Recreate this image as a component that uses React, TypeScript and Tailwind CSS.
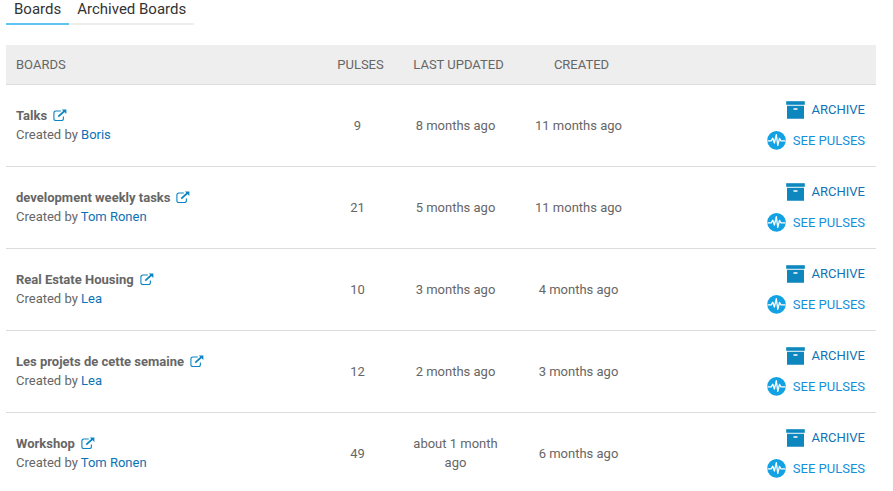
type Board = {
  name: string;
  creator: string;
  pulses: number;
  updated: string;
  created: string;
};

const BOARDS: Board[] = [
  { name: "Talks", creator: "Boris", pulses: 9, updated: "8 months ago", created: "11 months ago" },
  { name: "development weekly tasks", creator: "Tom Ronen", pulses: 21, updated: "5 months ago", created: "11 months ago" },
  { name: "Real Estate Housing", creator: "Lea", pulses: 10, updated: "3 months ago", created: "4 months ago" },
  { name: "Les projets de cette semaine", creator: "Lea", pulses: 12, updated: "2 months ago", created: "3 months ago" },
  { name: "Workshop", creator: "Tom Ronen", pulses: 49, updated: "about 1 month ago", created: "6 months ago" },
];

function ExternalLinkIcon() {
  return (
    <svg viewBox="0 0 14 14" className="size-3.5" fill="none" aria-hidden>
      <path
        d="M7.8 2H3Q.9 2 .9 4.1V9.4Q.9 11.5 3 11.5H8.3Q10.4 11.5 10.4 9.4V7.4"
        stroke="currentColor"
        strokeWidth="1.1"
      />
      <path d="M5.2 7.6L11.5 2" stroke="currentColor" strokeWidth="1.7" />
      <path d="M8.8 .4H13.4V5Z" fill="currentColor" />
    </svg>
  );
}

function ArchiveIcon() {
  return (
    <svg viewBox="0 0 19 18" className="h-[18px] w-[19px] text-[#0d87be]" aria-hidden>
      <path d="M.2 .2H18.8V3.8H.2Z" fill="currentColor" />
      <path
        fillRule="evenodd"
        d="M1 4.7H18V17.8H1ZM7.5 7.2V8.7H11.5V7.2Z"
        fill="currentColor"
      />
    </svg>
  );
}

function PulseIcon() {
  return (
    <svg viewBox="0 0 19 19" className="size-[19px]" fill="none" aria-hidden>
      <circle cx="9.5" cy="9.4" r="9.3" fill="#12a1e2" />
      <path
        d="M.5 9.8H4.2L5.8 7.2L7.4 12L9.3 3.6L10.8 14.4L12.5 7.4L13.8 9.8H18.5"
        stroke="#fff"
        strokeWidth="1.3"
        strokeLinejoin="round"
      />
    </svg>
  );
}

function BoardRow({ board }: { board: Board }) {
  return (
    <tr className="h-[82px] border-b border-[#dcdcdc] last:border-b-0">
      <td className="px-2.5">
        <div className="flex items-center gap-1.5 font-bold">
          {board.name}
          <a href="#open" aria-label={`Open ${board.name}`} className="text-[#0a85c2]">
            <ExternalLinkIcon />
          </a>
        </div>
        <div>
          Created by{" "}
          <a href="#creator" className="text-[#0b72b5]">
            {board.creator}
          </a>
        </div>
      </td>
      <td className="px-2.5 text-center">{board.pulses}</td>
      <td className="px-2.5 text-center">{board.updated}</td>
      <td className="px-2.5 text-center">{board.created}</td>
      <td className="pr-[11px] pl-2.5">
        <div className="flex flex-col items-end gap-3">
          <button type="button" className="flex items-center gap-[7px] text-[#0f73b5]">
            <ArchiveIcon />
            ARCHIVE
          </button>
          <a href="#pulses" className="flex items-center gap-[7px] text-[#1390dc]">
            <PulseIcon />
            SEE PULSES
          </a>
        </div>
      </td>
    </tr>
  );
}

export default function App() {
  return (
    <main className="bg-white pr-[17px] pl-1.5 font-['Roboto',sans-serif] text-[13px] leading-[19px] text-[#666]">
      <nav className="flex text-[15px] leading-[18px] text-[#333]">
        <a href="#boards" className="border-b-2 border-[#5fc4f2] px-2 pb-[5px]">
          Boards
        </a>
        <a href="#archived" className="border-b-2 border-[#eee] px-2 pb-[5px]">
          Archived Boards
        </a>
      </nav>

      <table className="mt-5 w-full table-fixed border-collapse">
        <colgroup>
          <col className="w-[311px]" />
          <col className="w-[81px]" />
          <col className="w-[115px]" />
          <col className="w-[131px]" />
          <col />
        </colgroup>
        <thead>
          <tr className="h-[39px] border-b border-[#dcdcdc] bg-[#eee]">
            <th className="px-2.5 text-left font-normal">BOARDS</th>
            <th className="pr-1 pl-2.5 font-normal">PULSES</th>
            <th className="pr-1 pl-2.5 font-normal">LAST UPDATED</th>
            <th className="pr-1 pl-2.5 font-normal">CREATED</th>
            <th aria-label="Actions" />
          </tr>
        </thead>
        <tbody>
          {BOARDS.map((board) => (
            <BoardRow key={board.name} board={board} />
          ))}
        </tbody>
      </table>
    </main>
  );
}
